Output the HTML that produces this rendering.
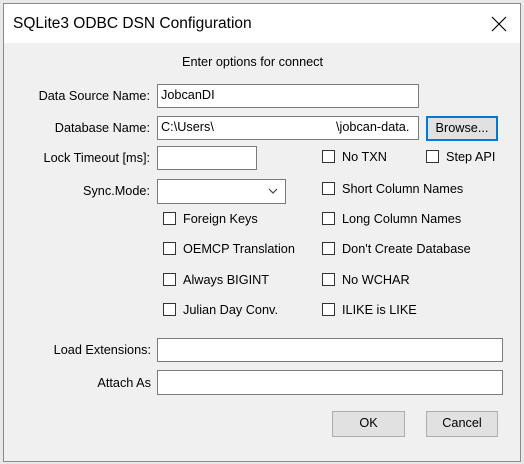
<!DOCTYPE html>
<html><head><style>
*{margin:0;padding:0;box-sizing:border-box}
body{width:524px;height:464px;background:#e8e8e8;position:relative;overflow:hidden;font-family:"Liberation Sans",sans-serif;font-size:12.7px;color:#000}
.win{position:absolute;left:3px;top:3px;width:518px;height:459px;background:#f0f0f0;border:1px solid #8a8a8a}
.tb{position:absolute;left:0;top:0;width:516px;height:39px;background:#fff}
.a{position:absolute;white-space:nowrap}
.lbl{position:absolute;text-align:right;white-space:nowrap}
.in{position:absolute;background:#fff;border:1px solid #7a7a7a;padding:3px 0 0 3px;white-space:nowrap;overflow:hidden}
.cb{position:absolute;width:13px;height:13px;border:1px solid #333;background:#fff}
.btn{position:absolute;background:#e1e1e1;border:1px solid #adadad;text-align:center;line-height:23px}
</style></head><body>
<div class="win">
<div class="tb"></div>
<div class="a" style="left:9px;top:11px;font-size:15.5px">SQLite3 ODBC DSN Configuration</div>
<svg class="a" style="left:487px;top:12px" width="16" height="16"><path d="M1 1L15 15M15 1L1 15" stroke="#000" stroke-width="1.2"/></svg>
</div>
<div class="a" style="left:182px;top:55px">Enter options for connect</div>
<div class="lbl" style="right:374px;top:89px">Data Source Name:</div>
<div class="in" style="left:157px;top:84px;width:262px;height:24px">JobcanDI</div>
<div class="lbl" style="right:374px;top:121px">Database Name:</div>
<div class="in" style="left:157px;top:116px;width:262px;height:24px">C:\Users\<span style="position:absolute;left:178px">\jobcan-data.</span></div>
<div class="btn" style="left:426px;top:116px;width:72px;height:25px;border:2px solid #0078d7;line-height:20px">Browse...</div>
<div class="lbl" style="right:374px;top:151px">Lock Timeout [ms]:</div>
<div class="in" style="left:157px;top:146px;width:100px;height:24px"></div>
<div class="lbl" style="right:374px;top:184px">Sync.Mode:</div>
<div class="in" style="left:157px;top:179px;width:129px;height:25px"></div>
<svg class="a" style="left:268px;top:187px" width="10" height="8"><path d="M1 2L5 6L9 2" stroke="#444" fill="none" stroke-width="1.2"/></svg>
<div class="cb" style="left:322px;top:150px"></div><div class="a" style="left:342px;top:150px">No TXN</div>
<div class="cb" style="left:426px;top:150px"></div><div class="a" style="left:446px;top:150px">Step API</div>
<div class="cb" style="left:322px;top:182px"></div><div class="a" style="left:342px;top:182px">Short Column Names</div>
<div class="cb" style="left:322px;top:212px"></div><div class="a" style="left:342px;top:212px">Long Column Names</div>
<div class="cb" style="left:322px;top:242px"></div><div class="a" style="left:342px;top:242px">Don't Create Database</div>
<div class="cb" style="left:322px;top:273px"></div><div class="a" style="left:342px;top:273px">No WCHAR</div>
<div class="cb" style="left:322px;top:303px"></div><div class="a" style="left:342px;top:303px">ILIKE is LIKE</div>
<div class="cb" style="left:163px;top:212px"></div><div class="a" style="left:183px;top:212px">Foreign Keys</div>
<div class="cb" style="left:163px;top:242px"></div><div class="a" style="left:183px;top:242px">OEMCP Translation</div>
<div class="cb" style="left:163px;top:273px"></div><div class="a" style="left:183px;top:273px">Always BIGINT</div>
<div class="cb" style="left:163px;top:303px"></div><div class="a" style="left:183px;top:303px">Julian Day Conv.</div>
<div class="lbl" style="right:373px;top:343px">Load Extensions:</div>
<div class="in" style="left:157px;top:338px;width:346px;height:24px"></div>
<div class="lbl" style="right:373px;top:376px">Attach As</div>
<div class="in" style="left:157px;top:370px;width:346px;height:25px"></div>
<div class="btn" style="left:332px;top:411px;width:73px;height:26px">OK</div>
<div class="btn" style="left:426px;top:411px;width:72px;height:26px">Cancel</div>
</body></html>
